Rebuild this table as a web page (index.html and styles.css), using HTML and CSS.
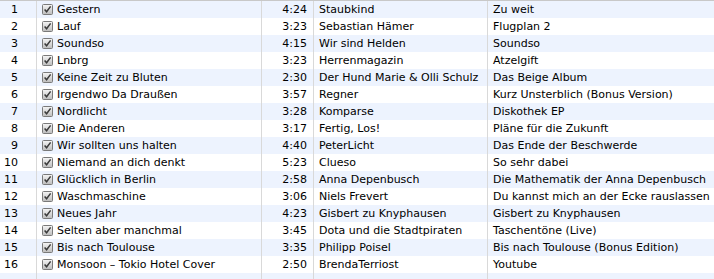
FILE: index.html
```html
<!DOCTYPE html>
<html>
<head>
<meta charset="utf-8">
<link rel="stylesheet" href="styles.css">
</head>
<body>
<svg width="0" height="0" class="defs">
  <defs>
    <linearGradient id="cbg" x1="0" y1="0" x2="0" y2="1">
      <stop offset="0" stop-color="#f6f6f6"/>
      <stop offset="1" stop-color="#bcbcbc"/>
    </linearGradient>
    <symbol id="check" viewBox="0 0 11 11">
      <rect x="0.5" y="0.5" width="10" height="10" rx="1" fill="url(#cbg)" stroke="#7a7a7a"/>
      <path d="M2.6 5.4 L4.6 7.7 L8.6 2.4" fill="none" stroke="#3a3a3a" stroke-width="1.5"/>
    </symbol>
  </defs>
</svg>
<div class="list">
  <div class="row"><div class="num">1</div><div class="title"><svg class="cb"><use href="#check"/></svg>Gestern</div><div class="time">4:24</div><div class="artist">Staubkind</div><div class="album">Zu weit</div></div>
  <div class="row"><div class="num">2</div><div class="title"><svg class="cb"><use href="#check"/></svg>Lauf</div><div class="time">3:23</div><div class="artist">Sebastian Hämer</div><div class="album">Flugplan 2</div></div>
  <div class="row"><div class="num">3</div><div class="title"><svg class="cb"><use href="#check"/></svg>Soundso</div><div class="time">4:15</div><div class="artist">Wir sind Helden</div><div class="album">Soundso</div></div>
  <div class="row"><div class="num">4</div><div class="title"><svg class="cb"><use href="#check"/></svg>Lnbrg</div><div class="time">3:23</div><div class="artist">Herrenmagazin</div><div class="album">Atzelgift</div></div>
  <div class="row"><div class="num">5</div><div class="title"><svg class="cb"><use href="#check"/></svg>Keine Zeit zu Bluten</div><div class="time">2:30</div><div class="artist">Der Hund Marie &amp; Olli Schulz</div><div class="album">Das Beige Album</div></div>
  <div class="row"><div class="num">6</div><div class="title"><svg class="cb"><use href="#check"/></svg>Irgendwo Da Draußen</div><div class="time">3:57</div><div class="artist">Regner</div><div class="album">Kurz Unsterblich (Bonus Version)</div></div>
  <div class="row"><div class="num">7</div><div class="title"><svg class="cb"><use href="#check"/></svg>Nordlicht</div><div class="time">3:28</div><div class="artist">Komparse</div><div class="album">Diskothek EP</div></div>
  <div class="row"><div class="num">8</div><div class="title"><svg class="cb"><use href="#check"/></svg>Die Anderen</div><div class="time">3:17</div><div class="artist">Fertig, Los!</div><div class="album">Pläne für die Zukunft</div></div>
  <div class="row"><div class="num">9</div><div class="title"><svg class="cb"><use href="#check"/></svg>Wir sollten uns halten</div><div class="time">4:40</div><div class="artist">PeterLicht</div><div class="album">Das Ende der Beschwerde</div></div>
  <div class="row"><div class="num">10</div><div class="title"><svg class="cb"><use href="#check"/></svg>Niemand an dich denkt</div><div class="time">5:23</div><div class="artist">Clueso</div><div class="album">So sehr dabei</div></div>
  <div class="row"><div class="num">11</div><div class="title"><svg class="cb"><use href="#check"/></svg>Glücklich in Berlin</div><div class="time">2:58</div><div class="artist">Anna Depenbusch</div><div class="album">Die Mathematik der Anna Depenbusch</div></div>
  <div class="row"><div class="num">12</div><div class="title"><svg class="cb"><use href="#check"/></svg>Waschmaschine</div><div class="time">3:06</div><div class="artist">Niels Frevert</div><div class="album">Du kannst mich an der Ecke rauslassen</div></div>
  <div class="row"><div class="num">13</div><div class="title"><svg class="cb"><use href="#check"/></svg>Neues Jahr</div><div class="time">4:23</div><div class="artist">Gisbert zu Knyphausen</div><div class="album">Gisbert zu Knyphausen</div></div>
  <div class="row"><div class="num">14</div><div class="title"><svg class="cb"><use href="#check"/></svg>Selten aber manchmal</div><div class="time">3:45</div><div class="artist">Dota und die Stadtpiraten</div><div class="album">Taschentöne (Live)</div></div>
  <div class="row"><div class="num">15</div><div class="title"><svg class="cb"><use href="#check"/></svg>Bis nach Toulouse</div><div class="time">3:35</div><div class="artist">Philipp Poisel</div><div class="album">Bis nach Toulouse (Bonus Edition)</div></div>
  <div class="row"><div class="num">16</div><div class="title"><svg class="cb"><use href="#check"/></svg>Monsoon – Tokio Hotel Cover</div><div class="time">2:50</div><div class="artist">BrendaTerriost</div><div class="album">Youtube</div></div>
  <div class="row"><div class="num"></div><div class="title"></div><div class="time"></div><div class="artist"></div><div class="album"></div></div>
</div>
</body>
</html>
```
FILE: styles.css
```css
html, body {
  margin: 0;
  padding: 0;
  background: #fff;
}
.defs {
  position: absolute;
  width: 0;
  height: 0;
}
.list {
  border-top: 1px solid #c8c8c8;
  font-family: "DejaVu Sans", sans-serif;
  font-size: 11px;
  color: #000;
  overflow: hidden;
  height: 278px;
}
.row {
  display: grid;
  grid-template-columns: 36px 225px 52px 174px 1fr;
  height: 17px;
  line-height: 17px;
}
.row:nth-child(odd) {
  background: #edf3fe;
}
.row > div {
  white-space: nowrap;
  overflow: hidden;
}
.num {
  text-align: right;
  padding-right: 18px;
}
.title, .time, .artist, .album {
  border-left: 1px solid #d9d9d9;
}
.title {
  display: flex;
  align-items: center;
  padding-left: 5px;
}
.cb {
  width: 11px;
  height: 11px;
  margin-right: 4px;
  flex: none;
}
.time {
  text-align: right;
  padding-right: 6px;
}
.artist {
  padding-left: 5px;
}
.album {
  padding-left: 5px;
}
```
